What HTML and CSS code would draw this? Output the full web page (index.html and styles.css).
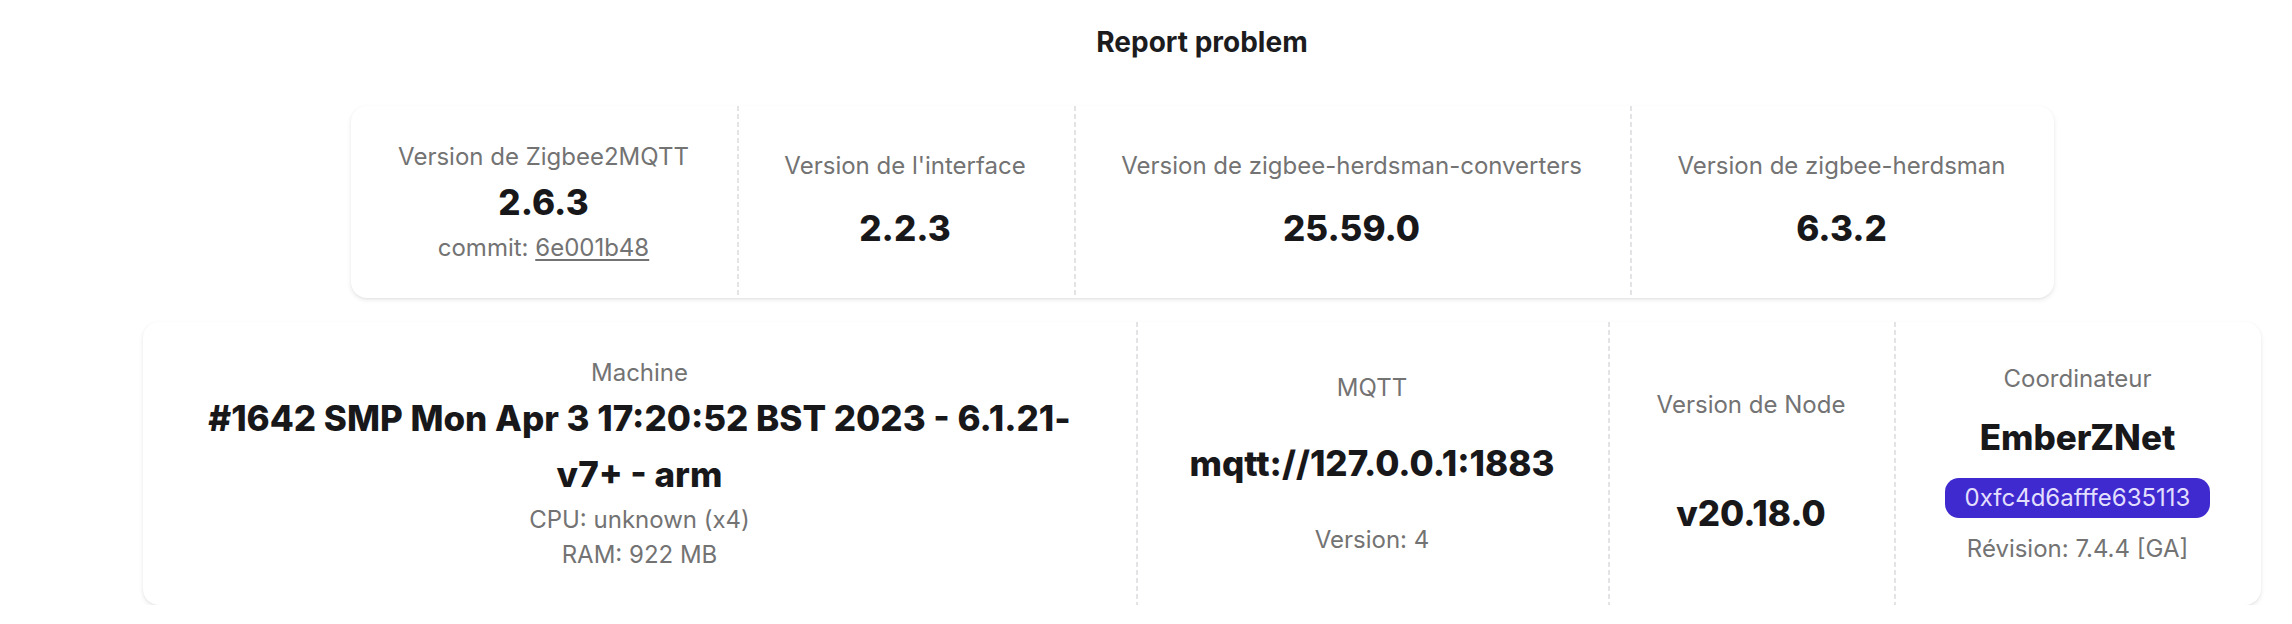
FILE: index.html
```html
<!DOCTYPE html>
<html lang="fr">
<head>
<meta charset="utf-8">
<title>Report problem</title>
<link rel="stylesheet" href="styles.css">
</head>
<body>
<main class="page">
  <h2 class="heading">Report problem</h2>

  <section class="stats stats-top">
    <div class="stat">
      <div class="stat-title">Version de Zigbee2MQTT</div>
      <div class="stat-value">2.6.3</div>
      <div class="stat-desc">commit: <a class="link" href="#">6e001b48</a></div>
    </div>
    <div class="stat">
      <div class="stat-title">Version de l'interface</div>
      <div class="stat-value">2.2.3</div>
    </div>
    <div class="stat">
      <div class="stat-title">Version de zigbee-herdsman-converters</div>
      <div class="stat-value">25.59.0</div>
    </div>
    <div class="stat">
      <div class="stat-title">Version de zigbee-herdsman</div>
      <div class="stat-value">6.3.2</div>
    </div>
  </section>

  <section class="stats stats-bottom">
    <div class="stat">
      <div class="stat-title">Machine</div>
      <div class="stat-value wrap">#1642 SMP Mon Apr 3 17:20:52 BST 2023 - 6.1.21-v7+ - arm</div>
      <div class="stat-desc">CPU: unknown (x4)</div>
      <div class="stat-desc">RAM: 922 MB</div>
    </div>
    <div class="stat">
      <div class="stat-title">MQTT</div>
      <div class="stat-value">mqtt://127.0.0.1:1883</div>
      <div class="stat-desc">Version: 4</div>
    </div>
    <div class="stat">
      <div class="stat-title">Version de Node</div>
      <div class="stat-value">v20.18.0</div>
    </div>
    <div class="stat">
      <div class="stat-title">Coordinateur</div>
      <div class="stat-value">EmberZNet</div>
      <div class="badge">0xfc4d6afffe635113</div>
      <div class="stat-desc">Révision: 7.4.4 [GA]</div>
    </div>
  </section>
</main>
</body>
</html>
```
FILE: styles.css
```css
html, body {
  margin: 0;
  padding: 0;
  background: #ffffff;
}

body {
  font-family: Inter, "Noto Sans", "Liberation Sans", sans-serif;
  color: #18181b;
}

.page {
  margin-left: 112px;
  width: 2180px;
  padding-top: 21px;
}

.heading {
  margin: 0;
  text-align: center;
  font-size: 28px;
  line-height: 42px;
  font-weight: 700;
  color: #1c1c1e;
}

.stats {
  display: grid;
  grid-auto-flow: column;
  margin-left: auto;
  margin-right: auto;
  background: #ffffff;
  border-radius: 16px;
  box-shadow: 0 2px 5px 0 rgba(0, 0, 0, 0.09), 0 1px 3px -1px rgba(0, 0, 0, 0.08);
}

.stats-top {
  width: 1703px;
  margin-top: 43px;
  grid-template-columns: 386px 337px 556px 424px;
}

.stats-bottom {
  width: 2118px;
  margin-top: 24px;
  grid-template-columns: 993px 472px 286px 367px;
}

.stat {
  display: grid;
  grid-template-columns: 100%;
  justify-items: center;
  align-items: center;
  padding: 33px 42px;
  text-align: center;
  min-width: 0;
}

.stat + .stat {
  background-image: repeating-linear-gradient(to bottom, #e4e4e7 0 5px, transparent 5px 8px);
  background-size: 2px 100%;
  background-repeat: no-repeat;
  background-position: left top;
}

.stat-title {
  font-size: 24px;
  line-height: 35px;
  color: #737373;
  white-space: nowrap;
}

.stat-value {
  font-size: 35px;
  line-height: 56px;
  font-weight: 800;
  color: #18181b;
  white-space: nowrap;
}

.stat-value.wrap {
  white-space: normal;
}

.stat-desc {
  font-size: 24px;
  line-height: 35px;
  color: #737373;
  white-space: nowrap;
}

.link {
  color: inherit;
  text-decoration: underline;
  text-underline-offset: 3px;
}

.badge {
  display: inline-flex;
  align-items: center;
  height: 40px;
  padding: 0 20px;
  border-radius: 14px;
  background: #3f2ad0;
  color: #e2defe;
  font-size: 24px;
  line-height: 40px;
  box-sizing: border-box;
}
```
